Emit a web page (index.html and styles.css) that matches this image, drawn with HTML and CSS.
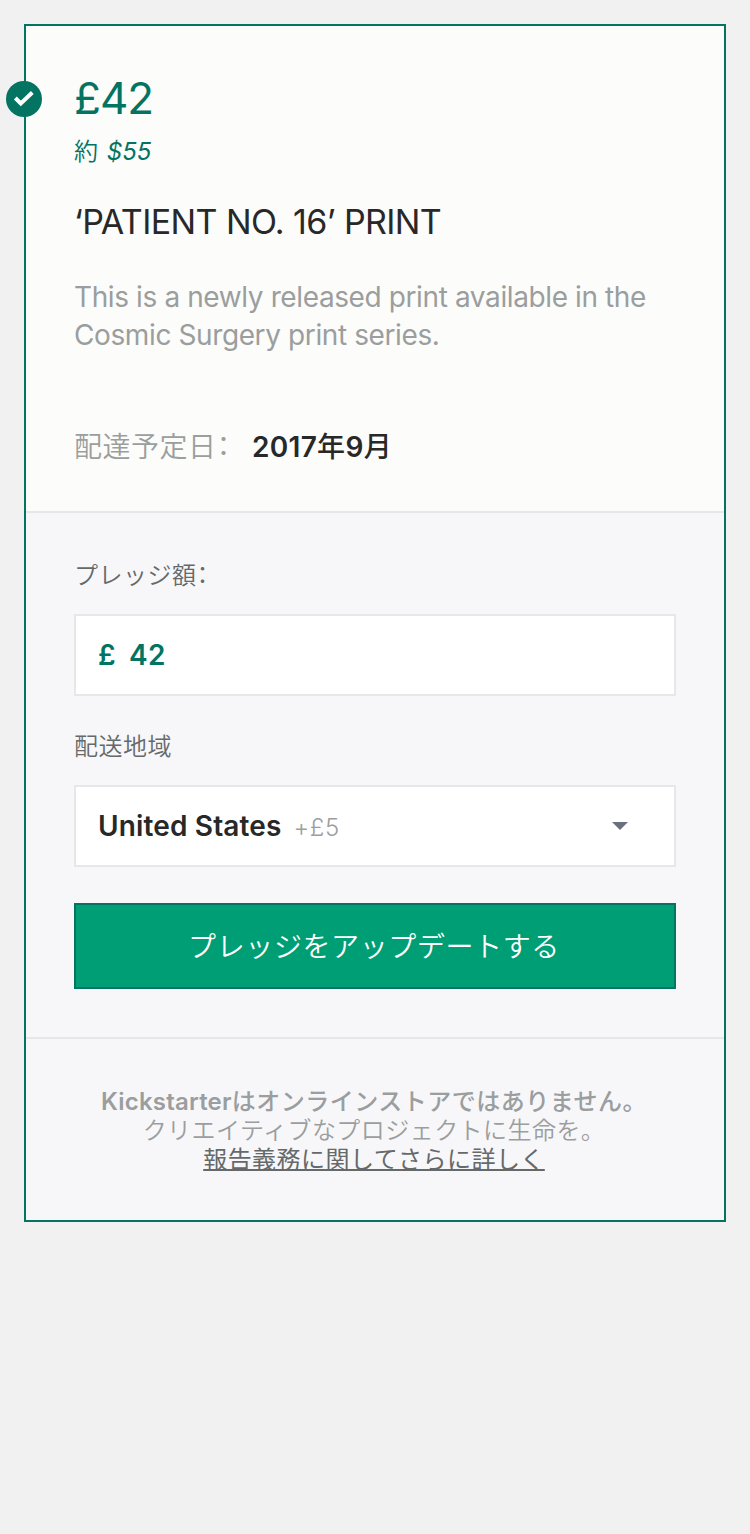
FILE: index.html
```html
<!DOCTYPE html>
<html lang="ja">
<head>
<meta charset="utf-8">
<title>Kickstarter</title>
<link rel="stylesheet" href="styles.css">
</head>
<body>
<main class="card">
  <svg class="check" viewBox="0 0 36 36"><circle cx="18" cy="18" r="18"/><path d="M9.300 17l5.500 5.500 11.500-11"/></svg>
  <section class="reward">
    <h1 class="price">£42</h1>
    <p class="approx">約 <i>$55</i></p>
    <h2 class="title">‘PATIENT NO. 16’ PRINT</h2>
    <p class="desc">This is a newly released print available in the<br>Cosmic Surgery print series.</p>
    <p class="delivery"><span class="label-date">配達予定日：</span><b class="date">2017<span class="kanji">年</span>9<span class="kanji">月</span></b></p>
  </section>
  <form class="pledge">
    <label class="label">プレッジ額：</label>
    <div class="field amount"><span>£</span><span>42</span></div>
    <label class="label region">配送地域</label>
    <div class="field select"><b>United States</b><span class="fee">+£5</span><svg class="caret" viewBox="0 0 16 8"><path d="M0 0h16l-8 8z"/></svg></div>
    <button class="submit" type="button">プレッジをアップデートする</button>
  </form>
  <footer class="note">
    <b>Kickstarter<span class="kana">はオンラインストアではありません。</span></b>
    <span class="tagline">クリエイティブなプロジェクトに生命を。</span>
    <a href="#">報告義務に関してさらに詳しく</a>
  </footer>
</main>
</body>
</html>
```
FILE: styles.css
```css
* { box-sizing: border-box; }
body { margin: 0; padding: 24px; background: #f1f1f1; font-family: Inter, "Noto Sans CJK JP", sans-serif; color: #282828; }
h1, h2, p { margin: 0; font-weight: 400; white-space: nowrap; }
.card { position: relative; height: 1198px; border: 2px solid #037362; background: #f7f7fa; }
.check { position: absolute; left: -20px; top: 55px; width: 36px; height: 36px; }
.check circle { fill: #037362; }
.check path { fill: none; stroke: #fff; stroke-width: 4; }
.reward { height: 487px; padding: 47px 48px 0; background: #fcfcfa; border-bottom: 2px solid #e6e7e9; }
.price { font-size: 44px; line-height: 50px; letter-spacing: -1px; color: #037362; }
.approx { margin-top: 11px; font-size: 24px; line-height: 36px; color: #037362; font-weight: 350; }
.approx i { margin-left: 2px; font-weight: 400; }
.title { margin-top: 30px; font-size: 34px; line-height: 44px; letter-spacing: -0.6px; }
.desc { margin-top: 34px; font-size: 28px; line-height: 38px; letter-spacing: -0.39px; color: #9b9e9e; }
.delivery { display: flex; margin-top: 73px; font-size: 28px; line-height: 40px; }
.label-date { width: 178px; color: #9b9e9e; font-weight: 350; letter-spacing: 0.5px; }
.label, .label-date { font-feature-settings: "halt"; }
.date { font-weight: 600; letter-spacing: 0.3px; }
.kanji { font-weight: 500; }
.pledge { height: 526px; padding: 45px 48px 0; border-bottom: 2px solid #e6e7e9; display: flex; flex-direction: column; }
.label { font-size: 24px; line-height: 36px; color: #656969; font-weight: 350; letter-spacing: 0.5px; }
.field { display: flex; align-items: center; flex: none; width: 602px; height: 82px; border: 2px solid #e6e7e9; background: #fff; padding: 0 46px 0 22px; font-size: 28px; margin-top: 20px; }
.amount { color: #037362; font-weight: 600; gap: 13px; letter-spacing: 0.4px; }
.region { margin-top: 33px; }
.select b { font-weight: 600; letter-spacing: 0.15px; }
.fee { margin: 2px 0 0 12px; font-size: 24px; color: #9b9e9e; font-weight: 350; letter-spacing: 0.6px; }
.caret { width: 16px; height: 8px; margin-left: auto; fill: #6b7080; }
.submit { margin-top: 36px; padding: 1px 2px 0 0; height: 86px; border: 2px solid #037362; background: #009e74; color: #fff; font: 350 28px/1 Inter, "Noto Sans CJK JP", sans-serif; letter-spacing: 0.6px; }
.note { padding: 48px 2px 0 0; display: flex; flex-direction: column; align-items: center; font-size: 24px; line-height: 29px; letter-spacing: 0.45px; color: #9b9e9e; white-space: nowrap; }
.note b { font-weight: 600; letter-spacing: 0.2px; }
.note .kana { font-weight: 500; letter-spacing: 0.5px; }
.tagline { font-weight: 350; }
.note a { color: #656969; text-decoration-thickness: 2px; text-decoration-skip-ink: none; text-underline-offset: 1px; }
```
